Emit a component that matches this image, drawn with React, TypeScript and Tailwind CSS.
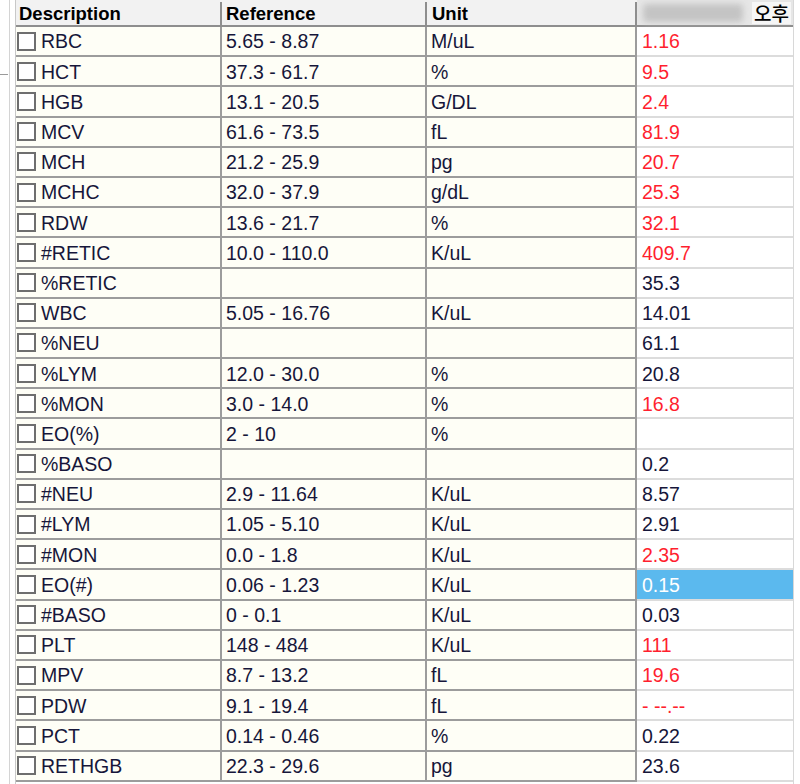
type Row = {
  name: string;
  range: string;
  unit: string;
  value: string;
  high?: boolean;
  selected?: boolean;
};

const rows: Row[] = [
  { name: "RBC", range: "5.65 - 8.87", unit: "M/uL", value: "1.16", high: true },
  { name: "HCT", range: "37.3 - 61.7", unit: "%", value: "9.5", high: true },
  { name: "HGB", range: "13.1 - 20.5", unit: "G/DL", value: "2.4", high: true },
  { name: "MCV", range: "61.6 - 73.5", unit: "fL", value: "81.9", high: true },
  { name: "MCH", range: "21.2 - 25.9", unit: "pg", value: "20.7", high: true },
  { name: "MCHC", range: "32.0 - 37.9", unit: "g/dL", value: "25.3", high: true },
  { name: "RDW", range: "13.6 - 21.7", unit: "%", value: "32.1", high: true },
  { name: "#RETIC", range: "10.0 - 110.0", unit: "K/uL", value: "409.7", high: true },
  { name: "%RETIC", range: "", unit: "", value: "35.3" },
  { name: "WBC", range: "5.05 - 16.76", unit: "K/uL", value: "14.01" },
  { name: "%NEU", range: "", unit: "", value: "61.1" },
  { name: "%LYM", range: "12.0 - 30.0", unit: "%", value: "20.8" },
  { name: "%MON", range: "3.0 - 14.0", unit: "%", value: "16.8", high: true },
  { name: "EO(%)", range: "2 - 10", unit: "%", value: "" },
  { name: "%BASO", range: "", unit: "", value: "0.2" },
  { name: "#NEU", range: "2.9 - 11.64", unit: "K/uL", value: "8.57" },
  { name: "#LYM", range: "1.05 - 5.10", unit: "K/uL", value: "2.91" },
  { name: "#MON", range: "0.0 - 1.8", unit: "K/uL", value: "2.35", high: true },
  { name: "EO(#)", range: "0.06 - 1.23", unit: "K/uL", value: "0.15", selected: true },
  { name: "#BASO", range: "0 - 0.1", unit: "K/uL", value: "0.03" },
  { name: "PLT", range: "148 - 484", unit: "K/uL", value: "111", high: true },
  { name: "MPV", range: "8.7 - 13.2", unit: "fL", value: "19.6", high: true },
  { name: "PDW", range: "9.1 - 19.4", unit: "fL", value: "- --.--", high: true },
  { name: "PCT", range: "0.14 - 0.46", unit: "%", value: "0.22" },
  { name: "RETHGB", range: "22.3 - 29.6", unit: "pg", value: "23.6" },
];

const App = () => {
  return (
    <div className="flex h-[784px] w-[800px] overflow-hidden bg-white font-['Liberation_Sans',Arial,sans-serif] text-[19.5px] text-[#16163a]">
      {/* left gutter */}
      <div className="flex w-[16px] shrink-0">
        <div className="w-[9px]">
          <div className="mt-[74px] h-[1px] w-[8px] bg-[#9a9a9a]" />
        </div>
        <div className="w-[1px] bg-[#d4d4d4]" />
        <div className="w-[5px]" />
        <div className="w-[1px] bg-[#c8c8c8]" />
      </div>

      <div className="flex w-[777px] shrink-0 flex-col">
        {/* header */}
        <div className="flex h-[27px] border-b-2 border-[#8e8e8e] bg-[#f2f2f2] pt-[2px] text-[18.5px] font-bold text-black">
          <div className="flex w-[206px] items-center border-r-2 border-[#8e8e8e] pl-[3px]">Description</div>
          <div className="flex w-[205px] items-center border-r-2 border-[#8e8e8e] pl-[4px]">Reference</div>
          <div className="flex w-[210px] items-center border-r-2 border-[#8e8e8e] pl-[5px]">Unit</div>
          <div className="-mt-[2px] flex flex-1 items-center justify-between bg-[#e6e6e6] pr-[2px]">
            <div className="ml-[6px] h-[18px] w-[100px] rounded bg-[#c4c4c4] blur-[3px]" />
            <span className="bg-[#f6f6f6] px-[2px] font-['Noto_Sans_CJK_KR',sans-serif] text-[19px] font-medium leading-[22px]">
              오후
            </span>
          </div>
        </div>

        {rows.map((r) => (
          <div key={r.name} className="flex h-[30.2px] shrink-0">
            <div className="flex w-[206px] items-center border-r-2 border-b-2 border-[#9c9c9c] bg-[#fefef6] pt-[2px] pl-[1px]">
              <span className="-mt-[2px] mr-[5px] h-[19px] w-[19px] border-2 border-[#6e6e6e] bg-white" />
              {r.name}
            </div>
            <div className="flex w-[205px] items-center border-r-2 border-b-2 border-[#9c9c9c] bg-[#fefef6] pt-[2px] pl-[4px]">
              {r.range}
            </div>
            <div className="flex w-[210px] items-center border-r-2 border-b-2 border-[#9c9c9c] bg-[#fefef6] pt-[2px] pl-[4px]">
              {r.unit}
            </div>
            <div
              className={
                r.selected
                  ? "flex flex-1 items-center border-b-2 border-[#dcdcdc] bg-[#5bb9ee] pt-[2px] pl-[5px] text-white"
                  : r.high
                    ? "flex flex-1 items-center border-b-2 border-[#dcdcdc] bg-white pt-[2px] pl-[5px] text-[#ff1f2f]"
                    : "flex flex-1 items-center border-b-2 border-[#dcdcdc] bg-white pt-[2px] pl-[5px]"
              }
            >
              {r.value}
            </div>
          </div>
        ))}
      </div>

      <div className="w-[1px] shrink-0 bg-[#d8d8d8]" />
    </div>
  );
};

export default App;
